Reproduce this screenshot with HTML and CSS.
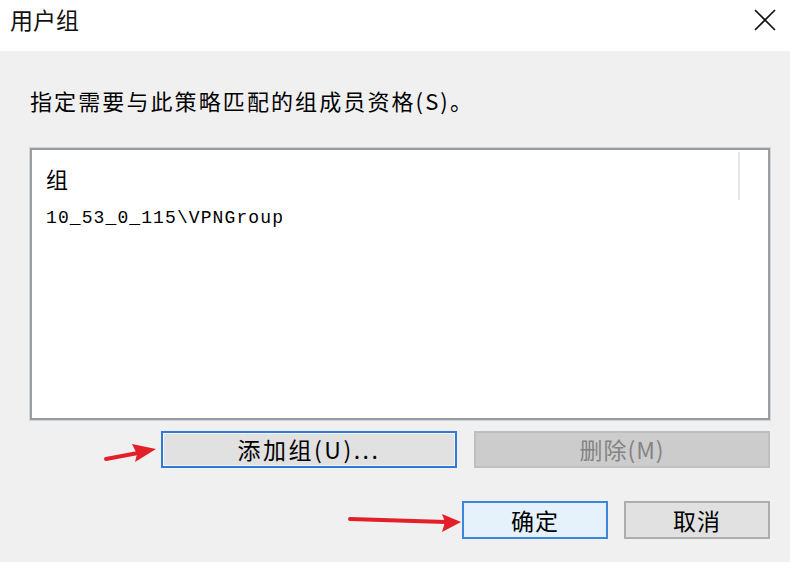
FILE: index.html
```html
<!DOCTYPE html>
<html lang="zh-CN">
<head>
  <meta charset="UTF-8">
  <meta name="viewport" content="width=device-width, initial-scale=1.0">
  <link rel="stylesheet" href="styles.css">
</head>
<body>

<div class="dialog">
  <div class="titlebar">
    <span class="title">用户组</span>
    <span class="close-btn">
      <svg width="22" height="22" viewBox="0 0 22 22"><path d="M1 1 L21 21 M21 1 L1 21" stroke="#111" stroke-width="1.6" fill="none"/></svg>
    </span>
  </div>

  <div class="content">
    <div class="prompt">指定需要与此策略匹配的组成员资格(S)。</div>

    <div class="listbox">
      <div class="list-head">组</div>
      <div class="list-item">10_53_0_115\VPNGroup</div>
      <div class="col-divider"></div>
    </div>

    <div class="btn-row">
      <button class="btn btn-focus btn-wide">添加组(U)...</button>
      <button class="btn btn-disabled btn-wide">删除(M)</button>
    </div>

    <div class="btn-row footer">
      <button class="btn btn-default">确定</button>
      <button class="btn">取消</button>
    </div>
  </div>

  <!-- red annotation arrows -->
  <svg class="annotations" width="790" height="562" viewBox="0 0 790 562">
    <path d="M106 459 L138 453" stroke="#e3202a" stroke-width="4" stroke-linecap="round" fill="none"/>
    <path d="M156 449 L132 444 L137 454 L135 462 Z" fill="#e3202a"/>
    <path d="M350 519 L446 522" stroke="#e3202a" stroke-width="4" stroke-linecap="round" fill="none"/>
    <path d="M461 522 L442 514 L445 522 L442 532 Z" fill="#e3202a"/>
  </svg>
</div>

</body>
</html>
```

FILE: styles.css
```css
body {
  margin: 0;
  background-color: #f0f0f0;
  font-family: "Noto Sans CJK SC", "Liberation Sans", sans-serif;
  color: #000;
}

.dialog {
  position: relative;
  width: 790px;
  height: 562px;
  overflow: hidden;
  display: flex;
  flex-direction: column;
}

.titlebar {
  height: 51px;
  background-color: #fff;
  display: flex;
  align-items: center;
  justify-content: space-between;
  padding: 0 14px 0 10px;
  flex-shrink: 0;
}

.title {
  font-size: 23px;
  line-height: 1;
  margin-top: -13px;
  color: #111;
}

.close-btn {
  display: flex;
  margin-top: -12px;
}

.content {
  flex: 1;
  background-color: #f0f0f0;
  padding: 0 20px 0 30px;
  display: flex;
  flex-direction: column;
}

.prompt {
  font-size: 22px;
  line-height: 24px;
  margin-top: 37px;
  letter-spacing: 2.1px;
  white-space: nowrap;
}

.listbox {
  position: relative;
  margin-top: 36px;
  height: 252px;
  background-color: #fff;
  border: 2px solid #999ca1;
  box-shadow: 0 0 0 1px #d4d4d4;
  padding: 16px 0 0 14px;
  box-sizing: content-box;
}

.list-head {
  font-size: 22px;
  line-height: 24px;
}

.list-item {
  font-family: "Liberation Mono", monospace;
  font-size: 18px;
  letter-spacing: 1.1px;
  line-height: 24px;
  margin-top: 16px;
}

.col-divider {
  position: absolute;
  top: 2px;
  left: 706px;
  width: 2px;
  height: 48px;
  background-color: #e6e6e6;
}

.btn-row {
  display: flex;
  justify-content: flex-end;
  gap: 17px;
  margin-top: 11px;
}

.footer {
  margin-top: 33px;
  gap: 16px;
}

.btn {
  width: 146px;
  height: 38px;
  font-family: "Noto Sans CJK SC", sans-serif;
  font-size: 23px;
  line-height: 1;
  background-color: #e1e1e1;
  border: 2px solid #adadad;
  color: #000;
  padding: 0;
  letter-spacing: 1px;
}

.btn-wide {
  width: 296px;
  height: 37px;
}

.btn-focus {
  border-color: #2f7ad6;
  box-shadow: inset 0 0 0 1px #f4f4f4;
  letter-spacing: 2.5px;
}

.btn-disabled {
  background-color: #cccccc;
  border-color: #bfbfbf;
  color: #838383;
}

.btn-default {
  background-color: #e5f1fb;
  border-color: #3d86d8;
}

.annotations {
  position: absolute;
  top: 0;
  left: 0;
  pointer-events: none;
}
```
